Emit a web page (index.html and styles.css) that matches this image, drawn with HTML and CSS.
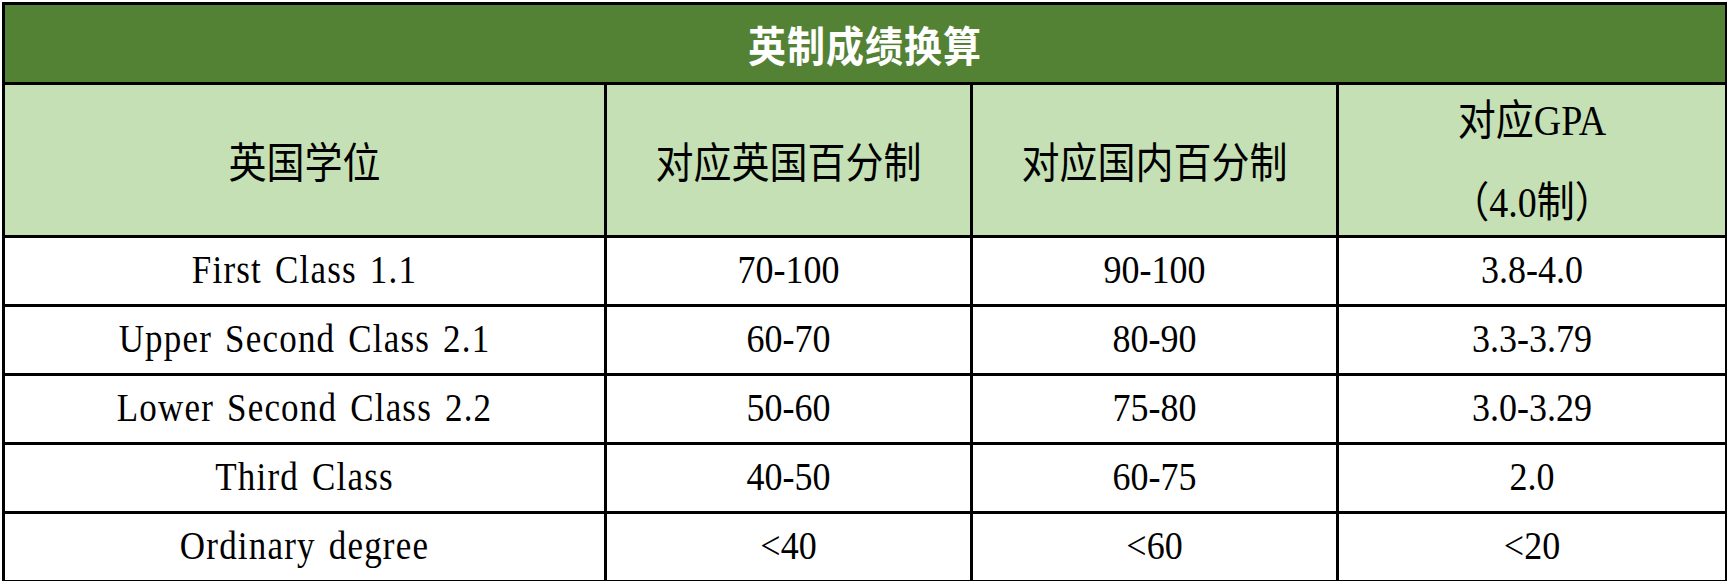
FILE: index.html
```html
<!DOCTYPE html>
<html lang="zh-CN">
<head>
<meta charset="utf-8">
<title>英制成绩换算</title>
<link rel="stylesheet" href="styles.css">
</head>
<body>
<table class="grade-table">
  <colgroup>
    <col class="c1">
    <col class="c2">
    <col class="c3">
    <col class="c4">
  </colgroup>
  <thead>
    <tr class="title-row">
      <th colspan="4" class="title"><span class="t">英制成绩换算</span></th>
    </tr>
    <tr class="head-row">
      <th class="head"><span class="t">英国学位</span></th>
      <th class="head"><span class="t">对应英国百分制</span></th>
      <th class="head"><span class="t">对应国内百分制</span></th>
      <th class="head head-gpa">
        <div class="gpa-line1"><span class="t">对应<span class="latin">GPA</span></span></div>
        <div class="gpa-line2"><span class="t">（<span class="latin">4.0</span>制）</span></div>
      </th>
    </tr>
  </thead>
  <tbody>
    <tr><td class="deg"><span class="t">First Class 1.1</span></td><td><span class="t">70-100</span></td><td><span class="t">90-100</span></td><td><span class="t">3.8-4.0</span></td></tr>
    <tr><td class="deg"><span class="t">Upper Second Class 2.1</span></td><td><span class="t">60-70</span></td><td><span class="t">80-90</span></td><td><span class="t">3.3-3.79</span></td></tr>
    <tr><td class="deg"><span class="t">Lower Second Class 2.2</span></td><td><span class="t">50-60</span></td><td><span class="t">75-80</span></td><td><span class="t">3.0-3.29</span></td></tr>
    <tr><td class="deg"><span class="t">Third Class</span></td><td><span class="t">40-50</span></td><td><span class="t">60-75</span></td><td><span class="t">2.0</span></td></tr>
    <tr><td class="deg"><span class="t">Ordinary degree</span></td><td><span class="t">&lt;40</span></td><td><span class="t">&lt;60</span></td><td><span class="t">&lt;20</span></td></tr>
  </tbody>
</table>
</body>
</html>
```

FILE: styles.css
```css
html, body {
  margin: 0;
  padding: 0;
  background: #ffffff;
}

body {
  padding: 2px 0 0 2px;
  font-family: "Liberation Serif", serif;
}

.grade-table {
  border-collapse: collapse;
  table-layout: fixed;
  width: 1723px;
  border: 3px solid #000;
  color: #000;
}

.c1 { width: 602px; }
.c2 { width: 366px; }
.c3 { width: 366px; }
.c4 { width: 389px; }

.grade-table th,
.grade-table td {
  border: 3px solid #000;
  padding: 0;
  text-align: center;
  vertical-align: middle;
}

.title-row { height: 80px; }
.head-row { height: 153px; }
.grade-table tbody tr { height: 69px; }

.t {
  display: inline-block;
  transform: scaleY(1.12);
  white-space: nowrap;
}

.title {
  background: #548235;
  color: #ffffff;
  font-family: "Noto Sans CJK SC", sans-serif;
  font-weight: 700;
  font-size: 38px;
  letter-spacing: 1px;
  line-height: 1.2;
  padding-bottom: 2px;
}

.head {
  background: #c5e0b4;
  font-family: "Noto Sans CJK SC", sans-serif;
  font-weight: 400;
  font-size: 38px;
  line-height: 1.2;
  padding-bottom: 2px;
}

.head-gpa {
  font-size: 38px;
  padding-bottom: 0;
}

.gpa-line1 {
  margin-bottom: 32px;
}

.gpa-line2 {
  font-size: 38px;
}

.latin {
  font-family: "Liberation Serif", serif;
}

.grade-table td {
  font-family: "Liberation Serif", "Times New Roman", serif;
  font-size: 36px;
  line-height: 1.1;
}

.grade-table td.deg {
  font-size: 35px;
  letter-spacing: 1.2px;
  word-spacing: 3px;
}
```
